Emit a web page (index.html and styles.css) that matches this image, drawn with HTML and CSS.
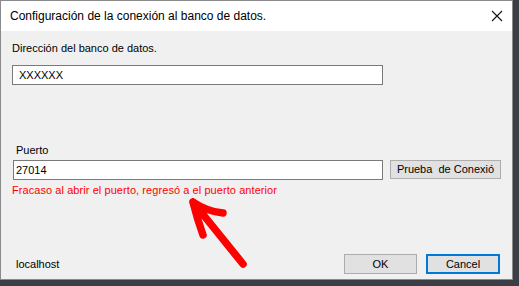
FILE: index.html
```html
<!DOCTYPE html>
<html>
<head>
<meta charset="utf-8">
<link rel="stylesheet" href="styles.css">
</head>
<body>
<div class="window">
  <div class="titlebar">
    <span class="title">Configuración de la conexión al banco de datos.</span>
    <svg class="close" width="12" height="12" viewBox="0 0 12 12"><path d="M1 1 L11 11 M11 1 L1 11" stroke="#111" stroke-width="1.1" fill="none"/></svg>
  </div>
  <div class="content">
    <div class="label lbl-db">Dirección del banco de datos.</div>
    <div class="textbox tb-db">XXXXXX</div>
    <div class="label lbl-port">Puerto</div>
    <div class="port-row">
      <div class="textbox tb-port">27014</div>
      <div class="button btn-test">Prueba&nbsp; de Conexió</div>
    </div>
    <div class="error">Fracaso al abrir el puerto, regresó a el puerto anterior</div>
    <div class="footer">
      <span class="host">localhost</span>
      <div class="buttons">
        <div class="button btn-ok">OK</div>
        <div class="button btn-cancel">Cancel</div>
      </div>
    </div>
    <svg class="arrow" width="70" height="75" viewBox="0 0 70 75">
      <path d="M8 8 L58 70 M8 8 C14 12 24 18 38 19 M8 8 C10 16 14 30 18 41" stroke="#ff0000" stroke-width="7.5" stroke-linecap="round" stroke-linejoin="round" fill="none"/>
    </svg>
  </div>
</div>
</body>
</html>
```
FILE: styles.css
```css
html, body {
  margin: 0;
  padding: 0;
}
body {
  width: 519px;
  height: 286px;
  background: #3b3f45;
  overflow: hidden;
}
.window {
  width: 511px;
  height: 278px;
  border: 1px solid #8a8a8a;
  background: #f0f0f0;
  display: flex;
  flex-direction: column;
}
.titlebar {
  height: 30px;
  background: #ffffff;
  display: flex;
  align-items: center;
  justify-content: space-between;
  padding: 0 9px 0 9px;
}
.title {
  font-family: "Liberation Sans", Arial, sans-serif;
  font-size: 12px;
  color: #000;
}
.close {
  display: block;
}
.content {
  position: relative;
  flex: 1;
  display: flex;
  flex-direction: column;
  padding: 0 11px 0 11px;
  font-family: "Liberation Sans", Arial, sans-serif;
  font-size: 11px;
  color: #000;
}
.label {
  height: 13px;
  line-height: 13px;
}
.lbl-db {
  margin-top: 11px;
}
.textbox {
  box-sizing: border-box;
  height: 20px;
  border: 1px solid #7a7a7a;
  background: #fff;
  line-height: 18px;
  padding-left: 3px;
}
.tb-db {
  width: 371px;
  margin-top: 10px;
  padding-left: 6px;
}
.lbl-port {
  margin-top: 59px;
  padding-left: 4px;
}
.port-row {
  display: flex;
  align-items: flex-start;
  margin-top: 3px;
  padding-left: 1px;
}
.tb-port {
  width: 370px;
  padding-left: 2px;
}
.button {
  box-sizing: border-box;
  background: #e1e1e1;
  border: 1px solid #adadad;
  text-align: center;
  height: 20px;
  line-height: 18px;
}
.btn-test {
  width: 111px;
  height: 19px;
  line-height: 17px;
  margin-left: 7px;
}
.error {
  color: #ff0000;
  margin-top: 4px;
  height: 13px;
  line-height: 13px;
  letter-spacing: 0.07px;
}
.footer {
  margin-top: auto;
  margin-bottom: 5px;
  display: flex;
  align-items: center;
  justify-content: space-between;
  padding-left: 4px;
  padding-right: 1px;
}
.host {
  line-height: 13px;
}
.buttons {
  display: flex;
  gap: 9px;
}
.btn-ok {
  width: 73px;
}
.btn-cancel {
  width: 74px;
  border: 2px solid #0078d7;
  line-height: 16px;
}
.arrow {
  position: absolute;
  left: 184px;
  top: 163px;
}
```
